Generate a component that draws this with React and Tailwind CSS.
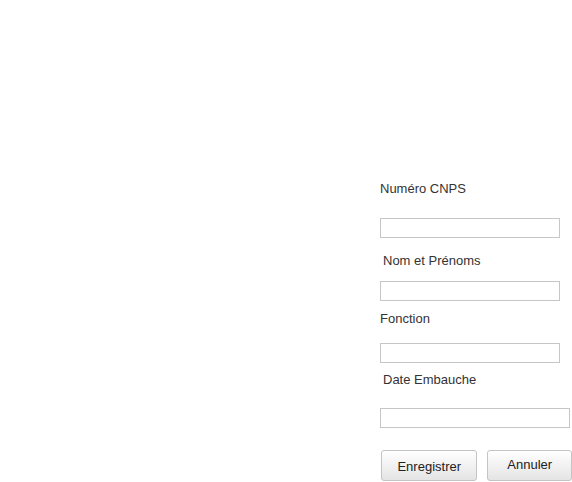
import React from 'react';

const font = { fontFamily: '"Liberation Sans", Arial, sans-serif' };

function Field({ className = '' }) {
  return <input type="text" className={`block h-[20px] border border-[#c6c6c6] bg-white outline-none ${className}`} />;
}

export default function App() {
  return (
    <div className="min-h-[482px] w-[572px] bg-white font-['Liberation_Sans',Arial,sans-serif] text-[13px] leading-[15px] text-[#333]">
      <div className="flex flex-col pl-[380px] pt-[181px]">
        <label className="block h-[15px]">Numéro CNPS</label>
        <Field className="mt-[22px] w-[180px]" />
        <label className="ml-[3px] mt-[15px] block h-[15px]">Nom et Prénoms</label>
        <Field className="mt-[13px] w-[180px]" />
        <label className="mt-[10px] block h-[15px]">Fonction</label>
        <Field className="mt-[17px] w-[180px]" />
        <label className="ml-[3px] mt-[9px] block h-[15px]">Date Embauche</label>
        <Field className="mt-[21px] w-[190px]" />
        <div className="ml-[1px] mt-[22px] flex gap-[10px]">
          <button style={font} className="h-[31px] w-[97px] rounded-[3px] border border-[#c4c4c4] bg-gradient-to-b from-white to-[#e4e4e4] pt-[1px] text-[13px] text-[#222]">
            Enregistrer
          </button>
          <button style={font} className="h-[31px] w-[85px] rounded-[3px] border border-[#c4c4c4] bg-gradient-to-b from-white to-[#e4e4e4] pb-[3px] text-[13px] text-[#222]">
            Annuler
          </button>
        </div>
      </div>
    </div>
  );
}
